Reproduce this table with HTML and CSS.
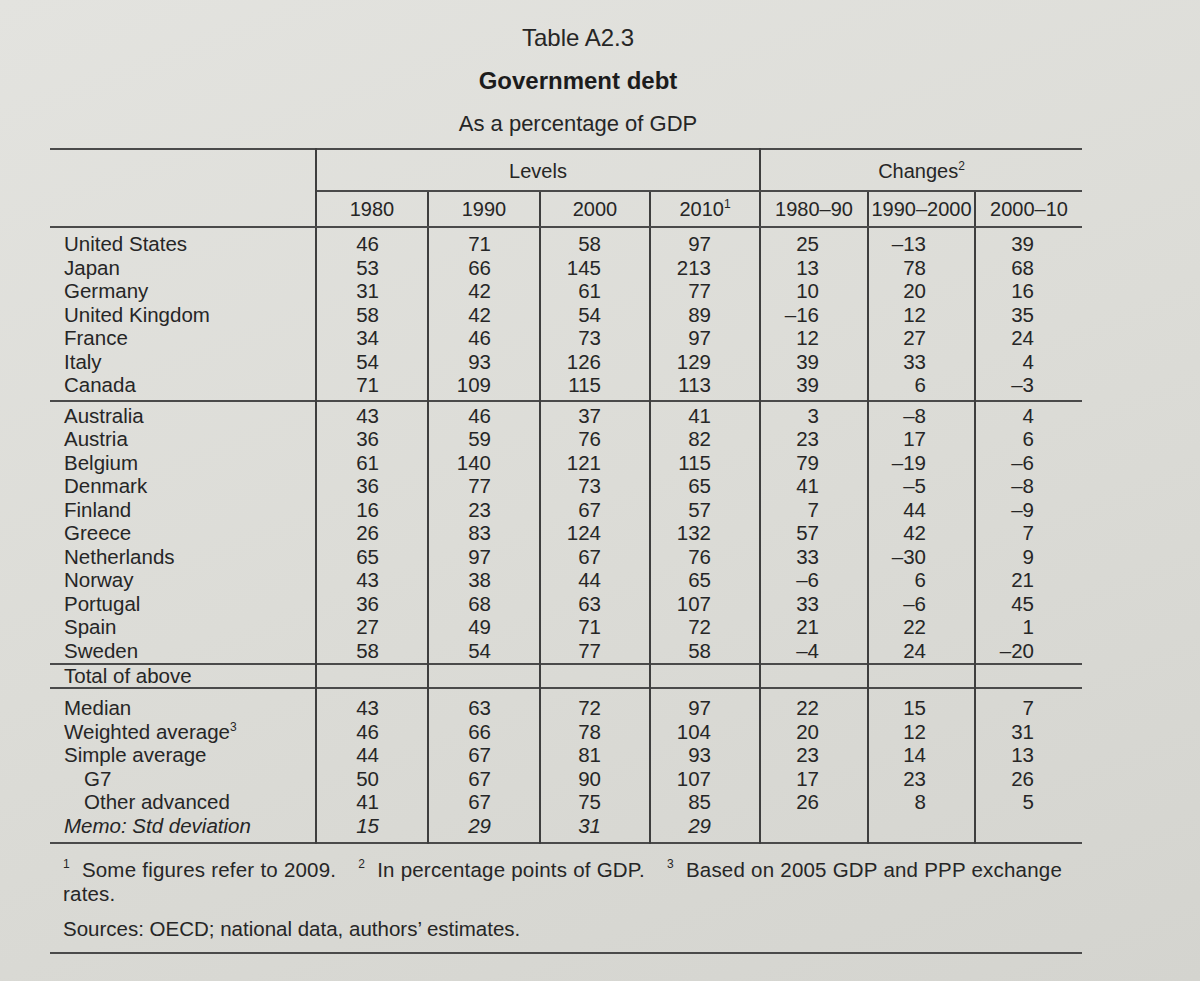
FILE: index.html
```html
<!DOCTYPE html>
<html lang="en">
<head>
<meta charset="utf-8">
<title>Table A2.3 Government debt</title>
<link rel="stylesheet" href="styles.css">
</head>
<body>
<div class="page">
  <header class="titles">
    <div class="t-num">Table A2.3</div>
    <h1 class="t-title">Government debt</h1>
    <div class="t-sub">As a percentage of GDP</div>
  </header>
  <table class="debt">
    <colgroup>
      <col class="c-lab"><col class="c-w112"><col class="c-w112"><col class="c-w110"><col class="c-w110"><col class="c-w108"><col class="c-w107"><col class="c-w107">
    </colgroup>
    <thead>
      <tr class="h1">
        <th class="lab-h" rowspan="2"></th>
        <th class="grp grp-lev" colspan="4">Levels</th>
        <th class="grp" colspan="3">Changes<sup>2</sup></th>
      </tr>
      <tr class="h2">
        <th>1980</th><th>1990</th><th>2000</th><th>2010<sup>1</sup></th>
        <th>1980–90</th><th>1990–2000</th><th>2000–10</th>
      </tr>
    </thead>
    <tbody class="g1">
      <tr><td class="name">United States</td><td>46</td><td>71</td><td>58</td><td>97</td><td>25</td><td>–13</td><td>39</td></tr>
      <tr><td class="name">Japan</td><td>53</td><td>66</td><td>145</td><td>213</td><td>13</td><td>78</td><td>68</td></tr>
      <tr><td class="name">Germany</td><td>31</td><td>42</td><td>61</td><td>77</td><td>10</td><td>20</td><td>16</td></tr>
      <tr><td class="name">United Kingdom</td><td>58</td><td>42</td><td>54</td><td>89</td><td>–16</td><td>12</td><td>35</td></tr>
      <tr><td class="name">France</td><td>34</td><td>46</td><td>73</td><td>97</td><td>12</td><td>27</td><td>24</td></tr>
      <tr><td class="name">Italy</td><td>54</td><td>93</td><td>126</td><td>129</td><td>39</td><td>33</td><td>4</td></tr>
      <tr><td class="name">Canada</td><td>71</td><td>109</td><td>115</td><td>113</td><td>39</td><td>6</td><td>–3</td></tr>
    </tbody>
    <tbody class="g2">
      <tr><td class="name">Australia</td><td>43</td><td>46</td><td>37</td><td>41</td><td>3</td><td>–8</td><td>4</td></tr>
      <tr><td class="name">Austria</td><td>36</td><td>59</td><td>76</td><td>82</td><td>23</td><td>17</td><td>6</td></tr>
      <tr><td class="name">Belgium</td><td>61</td><td>140</td><td>121</td><td>115</td><td>79</td><td>–19</td><td>–6</td></tr>
      <tr><td class="name">Denmark</td><td>36</td><td>77</td><td>73</td><td>65</td><td>41</td><td>–5</td><td>–8</td></tr>
      <tr><td class="name">Finland</td><td>16</td><td>23</td><td>67</td><td>57</td><td>7</td><td>44</td><td>–9</td></tr>
      <tr><td class="name">Greece</td><td>26</td><td>83</td><td>124</td><td>132</td><td>57</td><td>42</td><td>7</td></tr>
      <tr><td class="name">Netherlands</td><td>65</td><td>97</td><td>67</td><td>76</td><td>33</td><td>–30</td><td>9</td></tr>
      <tr><td class="name">Norway</td><td>43</td><td>38</td><td>44</td><td>65</td><td>–6</td><td>6</td><td>21</td></tr>
      <tr><td class="name">Portugal</td><td>36</td><td>68</td><td>63</td><td>107</td><td>33</td><td>–6</td><td>45</td></tr>
      <tr><td class="name">Spain</td><td>27</td><td>49</td><td>71</td><td>72</td><td>21</td><td>22</td><td>1</td></tr>
      <tr><td class="name">Sweden</td><td>58</td><td>54</td><td>77</td><td>58</td><td>–4</td><td>24</td><td>–20</td></tr>
    </tbody>
    <tbody class="g3">
      <tr><td class="name">Total of above</td><td></td><td></td><td></td><td></td><td></td><td></td><td></td></tr>
    </tbody>
    <tbody class="g4">
      <tr><td class="name">Median</td><td>43</td><td>63</td><td>72</td><td>97</td><td>22</td><td>15</td><td>7</td></tr>
      <tr><td class="name">Weighted average<sup>3</sup></td><td>46</td><td>66</td><td>78</td><td>104</td><td>20</td><td>12</td><td>31</td></tr>
      <tr><td class="name">Simple average</td><td>44</td><td>67</td><td>81</td><td>93</td><td>23</td><td>14</td><td>13</td></tr>
      <tr><td class="name ind">G7</td><td>50</td><td>67</td><td>90</td><td>107</td><td>17</td><td>23</td><td>26</td></tr>
      <tr><td class="name ind">Other advanced</td><td>41</td><td>67</td><td>75</td><td>85</td><td>26</td><td>8</td><td>5</td></tr>
      <tr class="memo"><td class="name">Memo: Std deviation</td><td>15</td><td>29</td><td>31</td><td>29</td><td></td><td></td><td></td></tr>
    </tbody>
  </table>
  <footer class="notes">
    <p class="fn"><sup>1</sup> Some figures refer to 2009. <sup class="gap">2</sup> In percentage points of GDP. <sup class="gap">3</sup> Based on 2005 GDP and PPP exchange rates.</p>
    <p class="src">Sources: OECD; national data, authors’ estimates.</p>
  </footer>
</div>
</body>
</html>
```
FILE: styles.css
```css
html, body {
  margin: 0;
  min-height: 100%;
}
body {
  background: linear-gradient(160deg, #e3e3df 0%, #dcdcd7 50%, #d4d4cf 100%);
  min-height: 981px;
  font-family: "Liberation Sans", Arial, sans-serif;
  color: #262626;
}
.page {
  padding: 16px 0 0 50px;
  width: 1032px;
}
.titles {
  text-align: center;
  padding-left: 24px;
  line-height: 43px;
  margin-bottom: 3px;
}
.t-num {
  font-size: 24px;
}
.t-title {
  font-size: 24px;
  font-weight: bold;
  margin: 0;
  color: #1c1c1c;
}
.t-sub {
  font-size: 22px;
}
sup {
  font-size: 12px;
  line-height: 0;
  vertical-align: 8px;
}
.debt {
  border-collapse: collapse;
  table-layout: fixed;
  width: 1032px;
  font-size: 20.5px;
  border-top: 2px solid #4a4a4a;
  border-bottom: 2px solid #4a4a4a;
}
.c-lab { width: 266px; }
.c-w112 { width: 112px; }
.c-w110 { width: 110px; }
.c-w108 { width: 108px; }
.c-w107 { width: 107px; }
.debt th {
  font-weight: normal;
  font-size: 20px;
  padding: 0;
  text-align: center;
}
.h1 th {
  padding: 9px 0 7px;
  line-height: 24px;
}
.lab-h {
  border-right: 2px solid #3e3e3e;
  border-bottom: 2px solid #4a4a4a;
}
.grp {
  border-bottom: 2px solid #4a4a4a;
}
.grp-lev {
  border-right: 2px solid #3e3e3e;
}
.h2 th {
  padding: 5px 0;
  line-height: 24px;
  border-right: 2px solid #3e3e3e;
  border-bottom: 2px solid #4a4a4a;
}
.h2 th:last-child {
  border-right: none;
}
.debt td {
  padding: 0 48px 0 0;
  line-height: 23.5px;
  text-align: right;
  border-right: 2px solid #3e3e3e;
  white-space: nowrap;
}
.debt td:last-child {
  border-right: none;
}
.debt td.name {
  text-align: left;
  padding-left: 14px;
  padding-right: 0;
}
.debt td.ind {
  padding-left: 34px;
}
.memo td {
  font-style: italic;
}
.debt tbody + tbody {
  border-top: 2px solid #4a4a4a;
}
.g1 tr:first-child td { padding-top: 4px; }
.g1 tr:last-child td { padding-bottom: 3px; }
.g2 tr:first-child td { padding-top: 2px; }
.g2 tr:last-child td { padding-bottom: 1px; }
.g3 td { line-height: 22px; }
.g4 tr:first-child td { padding-top: 7px; }
.g4 tr:last-child td { padding-bottom: 5px; }
.notes {
  padding: 14px 20px 11px 13px;
  border-bottom: 2px solid #4a4a4a;
  font-size: 20.5px;
  line-height: 24px;
}
.notes p {
  margin: 0;
}
.fn {
  text-align: justify;
  letter-spacing: 0.2px;
}
.fn sup {
  vertical-align: 9px;
  margin-right: 6px;
}
.fn sup.gap {
  margin-left: 16px;
}
.src {
  margin-top: 11px !important;
}
```
